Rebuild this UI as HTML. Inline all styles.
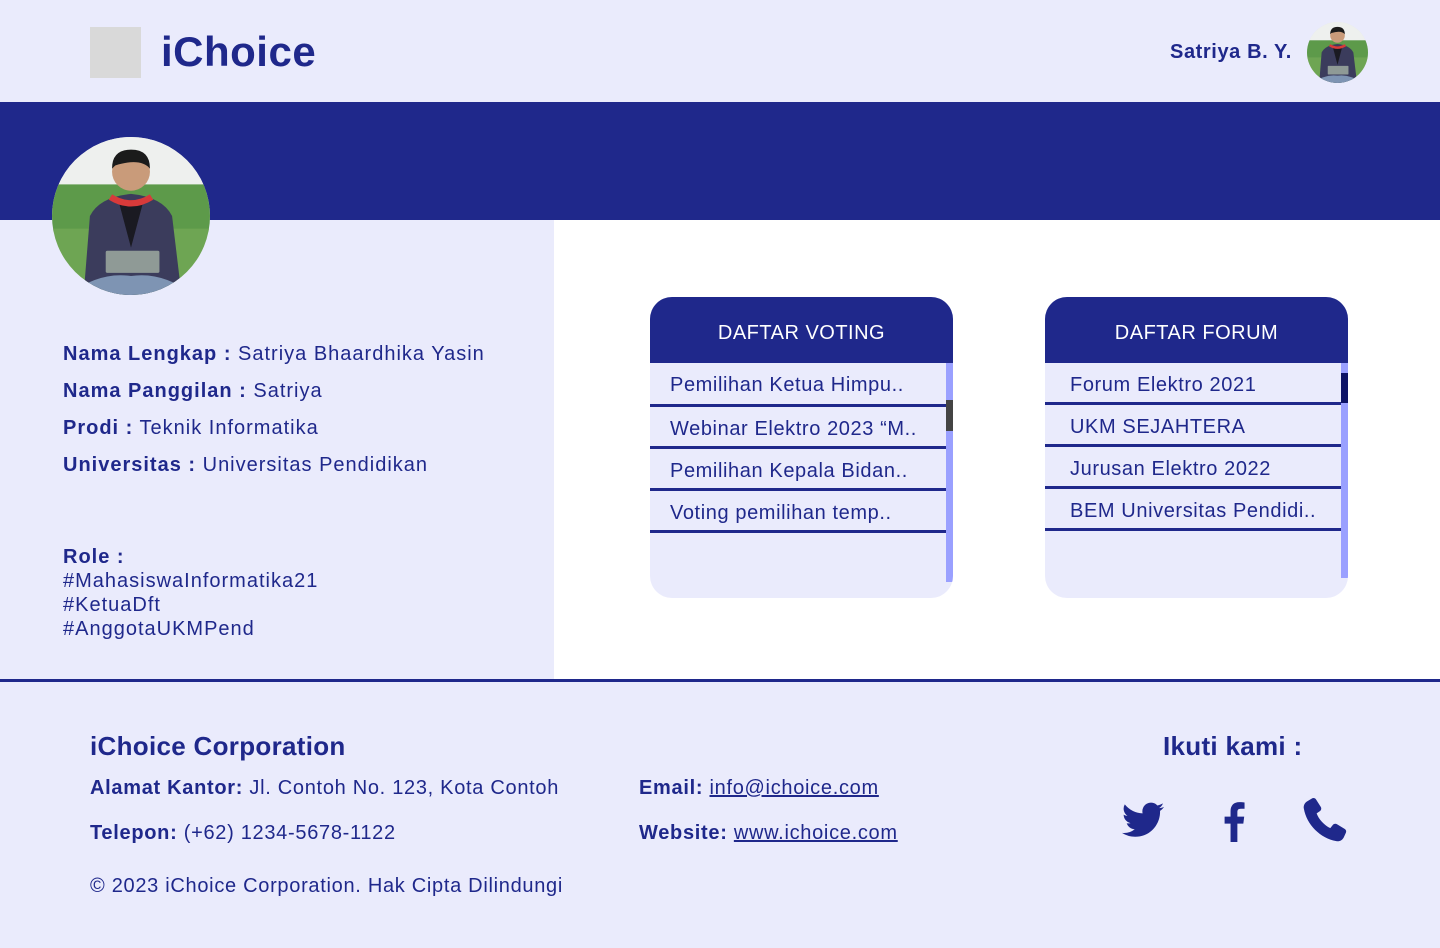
<!DOCTYPE html>
<html><head><meta charset="utf-8"><style>
*{margin:0;padding:0;box-sizing:border-box}
body{width:1440px;height:948px;position:relative;overflow:hidden;background:#fff;font-family:"Liberation Sans",sans-serif;color:#1f288b}
.a{position:absolute;white-space:nowrap}
.b{font-weight:bold}
.card{position:absolute;width:303px;height:301px;top:297px;background:#eaebfc;border-radius:22px;overflow:hidden}
.card .h{height:66px;background:#1f288b;color:#fff;font-size:20px;text-align:center;line-height:72px;letter-spacing:.5px}
.row{position:absolute;left:0;width:296px;height:42px;border-bottom:3px solid #1f288b;font-size:20px;padding-left:20px;line-height:44px;letter-spacing:.6px}
.sb{position:absolute;right:0;width:7px;background:#9aa0ff}
.inf{font-size:20px;letter-spacing:1px}
.ft{font-size:20px;letter-spacing:.7px}
</style></head><body>
<svg width="0" height="0" style="position:absolute"><defs>
<clipPath id="cc"><circle cx="50" cy="50" r="50"/></clipPath>
<g id="av" clip-path="url(#cc)">
<rect width="100" height="100" fill="#dfe5e0"/>
<rect y="0" width="100" height="30" fill="#eef0ee"/>
<rect y="30" width="100" height="30" fill="#5d9a4a"/>
<rect y="58" width="100" height="42" fill="#6ea553"/>
<path d="M20 100 L24 50 Q30 38 50 36 Q70 38 76 50 L82 100Z" fill="#3b3c5c"/>
<path d="M42 40 L50 70 L58 40Z" fill="#1a1a22"/>
<circle cx="50" cy="22" r="12" fill="#c99b7a"/>
<path d="M38 20 Q38 8 50 8 Q62 8 62 20 Q56 13 40 18Z" fill="#1b1b1b"/>
<path d="M37 38 Q50 46 63 38" stroke="#d83a3a" stroke-width="4" fill="none"/>
<rect x="34" y="72" width="34" height="14" rx="1" fill="#8f9a96"/>
<path d="M10 100 Q30 85 50 88 Q70 85 90 100Z" fill="#7e94b3"/>
</g></defs></svg>

<div class="a" style="left:0;top:0;width:1440px;height:102px;background:#eaebfc"></div>
<div class="a" style="left:90px;top:27px;width:51px;height:51px;background:#d9d9d9"></div>
<div class="a b" style="left:161px;top:28px;font-size:42px;letter-spacing:.5px">iChoice</div>
<div class="a b" style="left:1170px;top:41px;font-size:20px;letter-spacing:.6px">Satriya B. Y.</div>
<svg class="a" style="left:1307px;top:22px" width="61" height="61" viewBox="0 0 100 100"><use href="#av"/></svg>

<div class="a" style="left:0;top:102px;width:1440px;height:118px;background:#1f288b"></div>
<div class="a" style="left:0;top:220px;width:554px;height:459px;background:#eaebfc"></div>
<svg class="a" style="left:52px;top:137px" width="158" height="158" viewBox="0 0 100 100"><use href="#av"/></svg>

<div class="a inf" style="left:63px;top:343px"><b>Nama Lengkap :</b> Satriya Bhaardhika Yasin</div>
<div class="a inf" style="left:63px;top:380px"><b>Nama Panggilan :</b> Satriya</div>
<div class="a inf" style="left:63px;top:417px"><b>Prodi :</b> Teknik Informatika</div>
<div class="a inf" style="left:63px;top:454px"><b>Universitas :</b> Universitas Pendidikan</div>
<div class="a inf" style="left:63px;top:545px;line-height:24px"><b>Role :</b><br>#MahasiswaInformatika21<br>#KetuaDft<br>#AnggotaUKMPend</div>

<div class="card" style="left:650px">
<div class="h">DAFTAR VOTING</div>
<div class="row" style="top:66px;height:44px">Pemilihan Ketua Himpu..</div>
<div class="row" style="top:110px">Webinar Elektro 2023 “M..</div>
<div class="row" style="top:152px">Pemilihan Kepala Bidan..</div>
<div class="row" style="top:194px">Voting pemilihan temp..</div>
<div class="sb" style="top:66px;height:219px"></div>
<div class="sb" style="top:103px;height:31px;background:#444"></div>
</div>
<div class="card" style="left:1045px">
<div class="h">DAFTAR FORUM</div>
<div class="row" style="top:66px;height:42px;padding-left:25px">Forum Elektro 2021</div>
<div class="row" style="top:108px;padding-left:25px">UKM SEJAHTERA</div>
<div class="row" style="top:150px;padding-left:25px">Jurusan Elektro 2022</div>
<div class="row" style="top:192px;padding-left:25px">BEM Universitas Pendidi..</div>
<div class="sb" style="top:66px;height:215px"></div>
<div class="sb" style="top:76px;height:30px;background:#0d1366"></div>
</div>

<div class="a" style="left:0;top:679px;width:1440px;height:3px;background:#1f288b"></div>
<div class="a" style="left:0;top:682px;width:1440px;height:266px;background:#eaebfc"></div>
<div class="a b" style="left:90px;top:731px;font-size:26px;letter-spacing:.3px">iChoice Corporation</div>
<div class="a ft" style="left:90px;top:777px"><b>Alamat Kantor:</b> Jl. Contoh No. 123, Kota Contoh</div>
<div class="a ft" style="left:90px;top:822px"><b>Telepon:</b> (+62) 1234-5678-1122</div>
<div class="a ft" style="left:90px;top:875px">© 2023 iChoice Corporation. Hak Cipta Dilindungi</div>
<div class="a ft" style="left:639px;top:777px"><b>Email:</b> <u>info@ichoice.com</u></div>
<div class="a ft" style="left:639px;top:822px"><b>Website:</b> <u>www.ichoice.com</u></div>
<div class="a b" style="left:1163px;top:731px;font-size:26px;letter-spacing:.3px">Ikuti kami :</div>
<svg class="a" style="left:1120px;top:798px" width="46" height="46" viewBox="0 0 24 24"><path fill="#1f288b" d="M23 4.6c-.8.4-1.7.6-2.6.7.9-.6 1.6-1.4 2-2.5-.9.5-1.9.9-2.9 1.1A4.5 4.5 0 0 0 11.8 8 12.8 12.8 0 0 1 2.5 3.3a4.5 4.5 0 0 0 1.4 6c-.7 0-1.4-.2-2-.6 0 2.2 1.6 4 3.6 4.4-.7.2-1.4.2-2 .1.6 1.8 2.3 3.1 4.2 3.1A9 9 0 0 1 1 18.2 12.8 12.8 0 0 0 8 20.2c8.3 0 12.9-6.9 12.9-12.9v-.6c.9-.6 1.6-1.4 2.1-2.1z"/></svg>
<svg class="a" style="left:1218px;top:800px" width="30" height="42" viewBox="0 0 16 24"><path fill="#1f288b" d="M10.5 24V13.5h3.4l.5-4h-3.9V7c0-1.2.3-2 2-2h2.1V1.4C14.2 1.3 13 1.2 11.6 1.2 8.6 1.2 6.6 3 6.6 6.3v3.2H3.2v4h3.4V24z"/></svg>
<svg class="a" style="left:1298px;top:795px" width="52" height="52" viewBox="0 0 24 24"><path fill="#1f288b" d="M6.6 1.5c.6-.3 1.3-.1 1.7.5l2.2 3.5c.4.6.3 1.4-.3 1.9L8.6 8.5c.9 2.6 3.6 5.6 6.3 6.8l1.2-1.5c.5-.6 1.3-.7 1.9-.3l3.6 2.2c.6.4.8 1.1.5 1.7l-1 2.2c-.6 1.2-2 2-3.4 1.7C10.3 20 4 13.7 2.7 6.3 2.4 4.9 3.1 3.5 4.4 2.8z"/></svg>
</body></html>
